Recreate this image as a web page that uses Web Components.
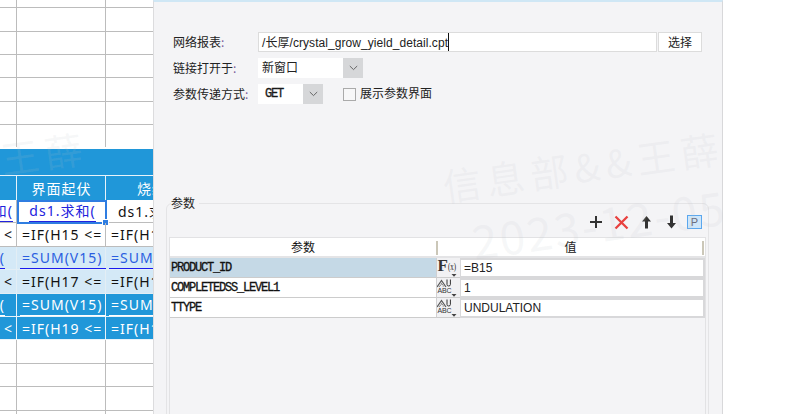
<!DOCTYPE html>
<html>
<head>
<meta charset="utf-8">
<style>
  html, body { margin: 0; height: 414px; overflow: hidden; background: #fff; }
  body {
    display: flex;
    position: relative;
    font-family: "Liberation Sans", "Noto Sans CJK SC", sans-serif;
  }
</style>
</head>
<body>
  <sheet-pane>
    <sheet-row h="8"></sheet-row>
    <sheet-row h="24"></sheet-row>
    <sheet-row h="23"></sheet-row>
    <sheet-row h="23"></sheet-row>
    <sheet-row h="24"></sheet-row>
    <sheet-row h="23"></sheet-row>
    <sheet-row h="22" kind="open"></sheet-row>
    <sheet-title></sheet-title>
    <sheet-row h="24" kind="head">
      <sheet-cell></sheet-cell><sheet-cell center>界面起伏</sheet-cell><sheet-cell center start>烧结</sheet-cell>
    </sheet-row>
    <sheet-row h="23">
      <sheet-cell end link style="padding-right:4px">求和(</sheet-cell><sheet-cell selected link center style="padding-left:2px">ds1.求和(</sheet-cell><sheet-cell style="padding-left:12px">ds1.求和(</sheet-cell>
    </sheet-row>
    <sheet-row h="24">
      <sheet-cell end>&lt;</sheet-cell><sheet-cell>=IF(H15 &lt;=</sheet-cell><sheet-cell>=IF(H15</sheet-cell>
    </sheet-row>
    <sheet-row h="23" kind="light">
      <sheet-cell end link style="padding-right:12px">(</sheet-cell><sheet-cell link wide>=SUM(V15)</sheet-cell><sheet-cell link wide>=SUM(V15)</sheet-cell>
    </sheet-row>
    <sheet-row h="24" kind="light">
      <sheet-cell end>&lt;</sheet-cell><sheet-cell>=IF(H17 &lt;=</sheet-cell><sheet-cell>=IF(H17</sheet-cell>
    </sheet-row>
    <sheet-row h="23" kind="blue">
      <sheet-cell end link style="padding-right:12px">(</sheet-cell><sheet-cell link wide>=SUM(V15)</sheet-cell><sheet-cell link wide>=SUM(V15)</sheet-cell>
    </sheet-row>
    <sheet-row h="23" kind="blue">
      <sheet-cell end>&lt;</sheet-cell><sheet-cell>=IF(H19 &lt;=</sheet-cell><sheet-cell>=IF(H19</sheet-cell>
    </sheet-row>
    <sheet-row h="24"></sheet-row>
    <sheet-row h="23"></sheet-row>
    <sheet-row h="24"></sheet-row>
    <sheet-row h="23"></sheet-row>
  </sheet-pane>

  <report-dialog>
    <form-row label="网络报表">
      <text-box>/长厚/crystal_grow_yield_detail.cpt</text-box>
      <plain-button>选择</plain-button>
    </form-row>
    <form-row label="链接打开于">
      <select-box w="105">新窗口</select-box>
    </form-row>
    <form-row label="参数传递方式">
      <select-box w="65" mono>GET</select-box>
      <check-box>展示参数界面</check-box>
    </form-row>
    <param-group slot="params">
      <param-tools></param-tools>
      <param-table>
        <param-row name="PRODUCT_ID" type="formula" active>=B15</param-row>
        <param-row name="COMPLETEDSS_LEVEL1" type="text">1</param-row>
        <param-row name="TTYPE" type="text">UNDULATION</param-row>
      </param-table>
    </param-group>
  </report-dialog>

  <water-mark x="443" y="167" size="38" spacing="6">信息部&amp;&amp;王薛</water-mark>
  <water-mark x="472" y="217" size="46" spacing="2">2023-12-05</water-mark>
  <water-mark x="-193" y="167" size="38" spacing="6">信息部&amp;&amp;王薛</water-mark>

<script>
class SheetPane extends HTMLElement {
  constructor() {
    super();
    this.attachShadow({ mode: "open" });
    this.shadowRoot.innerHTML = `
      <style>
        :host { display: block; width: 153px; flex: none; height: 414px; overflow: hidden;
          font-family: "Noto Sans", "Noto Sans CJK SC", sans-serif; font-size: 14px; }
      </style>
      <slot></slot>`;
  }
}

class SheetRow extends HTMLElement {
  constructor() {
    super();
    this.attachShadow({ mode: "open" });
    this.shadowRoot.innerHTML = `
      <style>
        :host { display: grid; grid-template-columns: 17px 89px 47px; box-sizing: border-box;
          border-bottom: 1px solid #bcbcbc; position: relative; color: #111; }
        :host([kind=open]) { border-bottom: 0; margin-bottom: 2px; }
        :host([kind=head]) { background: #2097d9; color: #fff; border-bottom: 0; }
        :host([kind=light]) { background: #d4e9f7; border-bottom-color: #e3eef5; color: #111; --link: #2a5ee0; --rule: #1a1aee; --line: #e3eef5; }
        :host([kind=blue]) { background: #2097d9; border-bottom-color: #e8f3fa; color: #fff; --link: #fff; --rule: #fff; --line: #e8f3fa; }
        :host([kind=head]) { --line: #e8f3fa; }
        .lines { display: contents; }
        .v { grid-row: 1; height: 100%; box-sizing: border-box; border-right: 1px solid var(--line, #bcbcbc); }
        .v.last { border-right: 0; }
        ::slotted(*) { grid-row: 1; }
        .v:nth-child(1) { grid-column: 1; }
        .v:nth-child(2) { grid-column: 2; }
        .v:nth-child(3) { grid-column: 3; }
      </style>
      <div class="lines"><div class="v"></div><div class="v"></div><div class="v last"></div></div>
      <slot></slot>`;
  }
  connectedCallback() {
    this.style.height = this.getAttribute("h") + "px";
    [...this.children].forEach((c, i) => { c.style.gridColumn = i + 1; });
  }
}

class SheetTitle extends HTMLElement {
  constructor() {
    super();
    this.attachShadow({ mode: "open" });
    this.shadowRoot.innerHTML = `
      <style>:host { display: block; height: 26px; background: #2097d9; border-bottom: 1px solid #e8f3fa; }</style>`;
  }
}

class SheetCell extends HTMLElement {
  constructor() {
    super();
    this.attachShadow({ mode: "open" });
    this.shadowRoot.innerHTML = `
      <style>
        :host { display: flex; align-items: center; box-sizing: border-box; min-width: 0; height: 100%;
          overflow: hidden; white-space: nowrap; padding-left: 5px; letter-spacing: 1px; position: relative; }
        :host([end]) { justify-content: flex-end; padding: 0 4px 0 0; }
        :host([center]) { justify-content: center; padding: 0; }
        :host([start]) { justify-content: flex-start; padding-left: 31px; }
        :host([wide]) { padding-left: 3px; }
        :host([wide]) span { padding-right: 12px; padding-left: 2px; }
        :host([link]) span { color: var(--link, #2222dd); border-bottom: 1px solid var(--rule, #2222dd); line-height: 20px; margin-top: 1px; }
        :host([selected]) { overflow: visible; }
        :host([selected]) .box { position: absolute; left: 0; top: 0; right: -1px; bottom: -2px;
          border: 2px solid #2f7de1; box-sizing: border-box; }
        :host([selected]) .grip { position: absolute; right: -3px; bottom: -4px; width: 5px; height: 5px;
          background: #2f7de1; border: 1px solid #fff; }
        .box, .grip { display: none; }
        :host([selected]) .box, :host([selected]) .grip { display: block; }
        span { flex: none; }
      </style>
      <span><slot></slot></span><div class="box"></div><div class="grip"></div>`;
  }
}

class ReportDialog extends HTMLElement {
  constructor() {
    super();
    this.attachShadow({ mode: "open" });
    this.shadowRoot.innerHTML = `
      <style>
        :host { display: flex; flex-direction: column; flex: none; width: 570px; height: 414px; box-sizing: border-box;
          background: #f4f4f6; border-top: 2px solid #cfe7f5; border-left: 1px solid #dcdcde; border-right: 1px solid #d8d8da;
          padding: 30px 0 0 12px; overflow: hidden; color: #222; }
        .form { display: flex; flex-direction: column; gap: 6px; padding-left: 7px; height: 164px; flex: none; }
      </style>
      <div class="form"><slot></slot></div>
      <slot name="params"></slot>`;
  }
}

class FormRow extends HTMLElement {
  constructor() {
    super();
    this.attachShadow({ mode: "open" });
    this.shadowRoot.innerHTML = `
      <style>
        :host { display: flex; height: 20px; align-items: center; }
        label { width: 85px; flex: none; padding-bottom: 2px; font: 12px "Noto Sans CJK SC", sans-serif; color: #222; }
        i { font-style: normal; color: #7a5a9a; }
        .body { display: flex; align-items: center; }
      </style>
      <label></label><div class="body"><slot></slot></div>`;
  }
  connectedCallback() {
    this.shadowRoot.querySelector("label").innerHTML = this.getAttribute("label") + "<i>:</i>";
  }
}

class TextBox extends HTMLElement {
  constructor() {
    super();
    this.attachShadow({ mode: "open" });
    this.shadowRoot.innerHTML = `
      <style>
        :host { display: flex; align-items: center; width: 399px; height: 20px; box-sizing: border-box;
          background: #fff; border: 1px solid #dcdcdc; padding-left: 3px; letter-spacing: .06px;
          font: 12px "Liberation Sans", "Noto Sans CJK SC", sans-serif; color: #222; white-space: nowrap; }
        span { padding-bottom: 2px; }
        .caret { width: 1px; height: 18px; background: #111; padding: 0; }
      </style>
      <span><slot></slot></span><span class="caret"></span>`;
  }
}

class PlainButton extends HTMLElement {
  constructor() {
    super();
    this.attachShadow({ mode: "open" });
    this.shadowRoot.innerHTML = `
      <style>
        :host { display: flex; align-items: center; justify-content: center; width: 44px; height: 20px; margin-left: 1px;
          box-sizing: border-box; background: #fff; border: 1px solid #dcdcdc; padding-bottom: 2px;
          font: 12px "Noto Sans CJK SC", sans-serif; color: #222; }
      </style>
      <slot></slot>`;
  }
}

class SelectBox extends HTMLElement {
  constructor() {
    super();
    this.attachShadow({ mode: "open" });
    this.shadowRoot.innerHTML = `
      <style>
        :host { display: flex; height: 20px; background: #fff; flex: none; font: 12px "Noto Sans CJK SC", sans-serif; color: #222; }
        :host([mono]) { font: 12px "Liberation Mono", monospace; letter-spacing: -1.2px; -webkit-text-stroke: .3px #111; }
        .val { flex: 1; display: flex; align-items: center; padding: 0 0 3px 4px; }
        :host([mono]) .val { padding: 0 0 0 7px; }
        .arrow { width: 20px; background: #d6d7d9; display: flex; align-items: center; justify-content: center; }
      </style>
      <div class="val"><slot></slot></div>
      <div class="arrow"><svg width="9" height="6" viewBox="0 0 9 6"><path d="M.8 1 4.5 4.6 8.2 1" fill="none" stroke="#666" stroke-width="1"/></svg></div>`;
  }
  connectedCallback() { this.style.width = this.getAttribute("w") + "px"; }
}

class CheckBox extends HTMLElement {
  constructor() {
    super();
    this.attachShadow({ mode: "open" });
    this.shadowRoot.innerHTML = `
      <style>
        :host { display: flex; align-items: center; gap: 4px; margin-left: 20px;
          font: 12px "Noto Sans CJK SC", sans-serif; color: #222; }
        .mark { width: 13px; height: 13px; box-sizing: border-box; border: 1px solid #aaa; background: #f7f7f8; }
        span { padding-bottom: 3px; }
      </style>
      <div class="mark"></div><span><slot></slot></span>`;
  }
}

class ParamGroup extends HTMLElement {
  constructor() {
    super();
    this.attachShadow({ mode: "open" });
    this.shadowRoot.innerHTML = `
      <style>
        :host { display: block; width: 543px; flex: none; }
        fieldset { margin: 0; padding: 0 2px; height: 260px; box-sizing: border-box;
          border: 1px solid #e4e4e6; border-radius: 6px; }
        legend { padding: 0 4px 1px 0; margin-left: 2px; font: 12px "Noto Sans CJK SC", sans-serif; color: #222; line-height: 14px; }
      </style>
      <fieldset><legend>参数</legend><slot></slot></fieldset>`;
  }
}

class ParamTools extends HTMLElement {
  constructor() {
    super();
    this.attachShadow({ mode: "open" });
    this.shadowRoot.innerHTML = `
      <style>
        :host { display: flex; justify-content: flex-end; align-items: center; height: 22px; padding: 0 4px 3px 0; margin-top: 0; gap: 0; }
        svg { display: block; flex: none; }
        .p { width: 15px; height: 14px; box-sizing: border-box; background: #cfe6f9; border: 1px solid #5aa7ee;
          color: #667; font: 11px/12px "Liberation Sans", sans-serif; text-align: center; margin-left: 10px; }
      </style>
      <svg width="14" height="14" viewBox="0 0 14 14" style="margin-right:11px"><path d="M7 1v12M1 7h12" stroke="#333" stroke-width="2"/></svg>
      <svg width="15" height="15" viewBox="0 0 15 15" style="margin-right:12px"><path d="M1.5 1.5l12 12M13.5 1.5l-12 12" stroke="#e8413f" stroke-width="2.3"/></svg>
      <svg width="11" height="14" viewBox="0 0 11 14" style="margin-right:14px"><path d="M5.5 1 10 6.5H7V13.5H4V6.5H1z" fill="#333"/></svg>
      <svg width="11" height="14" viewBox="0 0 11 14"><path d="M5.5 13.5 10 8H7V.5H4V8H1z" fill="#333"/></svg>
      <div class="p">P</div>`;
  }
}

class ParamTable extends HTMLElement {
  constructor() {
    super();
    this.attachShadow({ mode: "open" });
    this.shadowRoot.innerHTML = `
      <style>
        :host { display: block; margin: 1px 0 0 0; height: 200px; width: 537px; box-sizing: border-box;
          border: 1px solid #e2e2e4; border-bottom: 0; font: 12px "Noto Sans CJK SC", sans-serif; color: #111; }
        .head { display: grid; grid-template-columns: 266px 1fr; height: 18px; background: #fff; border-bottom: 2px solid #e4e4e6; }
        .head div { display: flex; align-items: center; justify-content: center; position: relative; padding-bottom: 2px; box-sizing: border-box; }
        .head div + div::before, .head div + div::after { content: ""; position: absolute; top: 3px; bottom: 2px; width: 2px; background: #cbc7b8; }
        .head div + div::before { left: 0; }
        .head div + div::after { right: 1px; }
      </style>
      <div class="head"><div>参数</div><div>值</div></div>
      <slot></slot>`;
  }
}

class ParamRow extends HTMLElement {
  constructor() {
    super();
    this.attachShadow({ mode: "open" });
    this.shadowRoot.innerHTML = `
      <style>
        :host { display: grid; grid-template-columns: 266px 24px 1fr; height: 20px; box-sizing: border-box; }
        .name { background: #fff; border-bottom: 1px solid #ccc; display: flex; align-items: center; padding-left: 1px;
          font: 12px "Liberation Mono", monospace; letter-spacing: -1.2px; -webkit-text-stroke: .3px #111; color: #111; white-space: nowrap; }
        :host([active]) .name { background: #c5d9e6; }
        .kind { background: #f1f1f3; border-left: 1px solid #d0d0d2; border-bottom: 1px solid #ccc; box-sizing: border-box; }
        .value { box-sizing: border-box; background: #fff; border: 2px solid #d8d8da; border-left-width: 1px; width: 245px;
          display: flex; align-items: center; padding: 0 0 1px 3px; font: 12px "Liberation Sans", sans-serif; color: #222; }
        svg { display: block; }
      </style>
      <div class="name"></div>
      <div class="kind"></div>
      <div class="value"><slot></slot></div>`;
  }
  connectedCallback() {
    const root = this.shadowRoot;
    root.querySelector(".name").textContent = this.getAttribute("name");
    const arrow = `<path d="M14.5 16h5l-2.5 2.8z" fill="#444"/>`;
    root.querySelector(".kind").innerHTML = this.getAttribute("type") === "formula"
      ? `<svg width="23" height="19" viewBox="0 0 23 19">
           <text x="0.5" y="12.5" style="font:bold 17px 'Liberation Serif',serif" fill="#333">F</text>
           <text x="11" y="11.5" style="font:10px 'Liberation Serif',serif" fill="#222" textLength="8" lengthAdjust="spacingAndGlyphs">(x)</text>${arrow}</svg>`
      : `<svg width="23" height="19" viewBox="0 0 23 19">
           <path d="M0 9 4.5 2.5 9 9" fill="none" stroke="#555" stroke-width="1.2"/>
           <path d="M2 9 4.5 5.5 7 9" fill="none" stroke="#777" stroke-width="1.2" stroke-dasharray="1 .7"/>
           <path d="M10 1.5V6.5q0 1.5 1.7 1.5T13.4 6.5V1.5" fill="none" stroke="#333"/>
           <text x="0.5" y="15" style="font:7px 'Liberation Sans',sans-serif" fill="#333" textLength="14">ABC</text>${arrow}</svg>`;
  }
}

class WaterMark extends HTMLElement {
  constructor() {
    super();
    this.attachShadow({ mode: "open" });
    this.shadowRoot.innerHTML = `
      <style>
        :host { position: absolute; white-space: nowrap; pointer-events: none; transform: rotate(-8deg);
          transform-origin: left center; font-family: "Noto Sans CJK SC", sans-serif; color: rgba(190,195,200,.13); line-height: 1; }
      </style>
      <slot></slot>`;
  }
  connectedCallback() {
    this.style.left = this.getAttribute("x") + "px";
    this.style.top = this.getAttribute("y") + "px";
    this.style.fontSize = this.getAttribute("size") + "px";
    this.style.letterSpacing = this.getAttribute("spacing") + "px";
  }
}

customElements.define("sheet-pane", SheetPane);
customElements.define("sheet-row", SheetRow);
customElements.define("sheet-title", SheetTitle);
customElements.define("sheet-cell", SheetCell);
customElements.define("report-dialog", ReportDialog);
customElements.define("form-row", FormRow);
customElements.define("text-box", TextBox);
customElements.define("plain-button", PlainButton);
customElements.define("select-box", SelectBox);
customElements.define("check-box", CheckBox);
customElements.define("param-group", ParamGroup);
customElements.define("param-tools", ParamTools);
customElements.define("param-table", ParamTable);
customElements.define("param-row", ParamRow);
customElements.define("water-mark", WaterMark);
</script>
</body>
</html>
